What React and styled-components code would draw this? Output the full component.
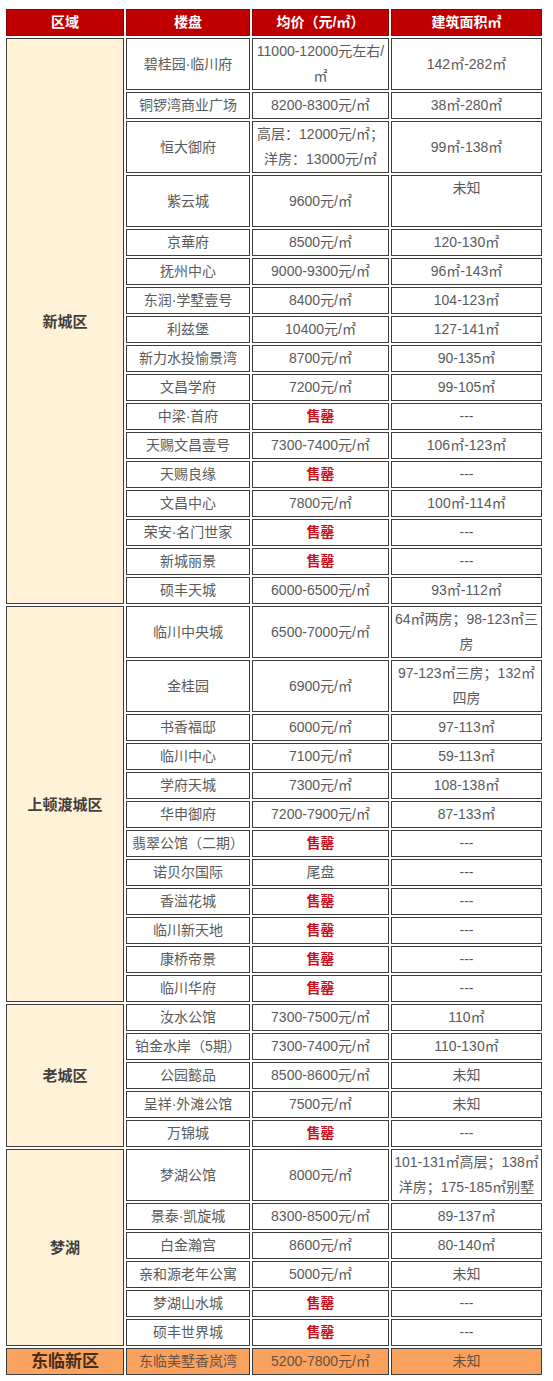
import { createGlobalStyle } from "styled-components";
import styled from "styled-components";

const GlobalStyle = createGlobalStyle`
  html, body {
    margin: 0;
    padding: 0;
    background: #ffffff;
  }
  body {
    font-family: "Liberation Sans", "Noto Sans CJK SC", sans-serif;
  }
`;

const Page = styled.div`
  padding: 7px 0 0 4px;
  width: 553px;
  box-sizing: border-box;
`;

const Table = styled.table`
  width: 540px;
  table-layout: fixed;
  border-collapse: separate;
  border-spacing: 2px;
  font-size: 14px;
  line-height: 25px;
`;

const HeadCell = styled.th`
  background: #c00000;
  border: 1px solid #8a0606;
  color: #ffffff;
  font-weight: bold;
  font-size: 14px;
  padding: 0;
  text-align: center;
`;

const Cell = styled.td`
  border: 1px solid #3d3d3d;
  background: ${(p) => (p.$last ? "#f9a15e" : "#ffffff")};
  color: ${(p) => (p.$sold ? "#cc1020" : p.$last ? "#6b5040" : "#5a5a5a")};
  font-weight: ${(p) => (p.$sold ? "bold" : "normal")};
  text-align: center;
  vertical-align: middle;
  padding: 0;
  white-space: nowrap;
  overflow: hidden;
`;

const RegionCell = styled.td`
  border: 1px solid #3d3d3d;
  background: ${(p) => (p.$last ? "#f9a15e" : "#fff2d6")};
  color: ${(p) => (p.$last ? "#4a2e1a" : "#3f3f3f")};
  font-weight: bold;
  font-size: ${(p) => (p.$last ? "17px" : "15px")};
  text-align: center;
  vertical-align: middle;
  padding: 0;
`;

const Line = styled.span`
  display: block;
`;

const regions = [
  {
    name: "新城区",
    rows: [
      ["碧桂园·临川府", ["11000-12000元左右/", "㎡"], ["142㎡-282㎡"]],
      ["铜锣湾商业广场", ["8200-8300元/㎡"], ["38㎡-280㎡"]],
      ["恒大御府", ["高层：12000元/㎡；", "洋房：13000元/㎡"], ["99㎡-138㎡"]],
      ["紫云城", ["9600元/㎡"], ["未知", "\u00a0"]],
      ["京華府", ["8500元/㎡"], ["120-130㎡"]],
      ["抚州中心", ["9000-9300元/㎡"], ["96㎡-143㎡"]],
      ["东润·学墅壹号", ["8400元/㎡"], ["104-123㎡"]],
      ["利兹堡", ["10400元/㎡"], ["127-141㎡"]],
      ["新力水投愉景湾", ["8700元/㎡"], ["90-135㎡"]],
      ["文昌学府", ["7200元/㎡"], ["99-105㎡"]],
      ["中梁·首府", ["售罄"], ["---"]],
      ["天赐文昌壹号", ["7300-7400元/㎡"], ["106㎡-123㎡"]],
      ["天赐良缘", ["售罄"], ["---"]],
      ["文昌中心", ["7800元/㎡"], ["100㎡-114㎡"]],
      ["荣安·名门世家", ["售罄"], ["---"]],
      ["新城丽景", ["售罄"], ["---"]],
      ["硕丰天城", ["6000-6500元/㎡"], ["93㎡-112㎡"]],
    ],
  },
  {
    name: "上顿渡城区",
    rows: [
      ["临川中央城", ["6500-7000元/㎡"], ["64㎡两房；98-123㎡三", "房"]],
      ["金桂园", ["6900元/㎡"], ["97-123㎡三房；132㎡", "四房"]],
      ["书香福邸", ["6000元/㎡"], ["97-113㎡"]],
      ["临川中心", ["7100元/㎡"], ["59-113㎡"]],
      ["学府天城", ["7300元/㎡"], ["108-138㎡"]],
      ["华申御府", ["7200-7900元/㎡"], ["87-133㎡"]],
      ["翡翠公馆（二期）", ["售罄"], ["---"]],
      ["诺贝尔国际", ["尾盘"], ["---"]],
      ["香溢花城", ["售罄"], ["---"]],
      ["临川新天地", ["售罄"], ["---"]],
      ["康桥帝景", ["售罄"], ["---"]],
      ["临川华府", ["售罄"], ["---"]],
    ],
  },
  {
    name: "老城区",
    rows: [
      ["汝水公馆", ["7300-7500元/㎡"], ["110㎡"]],
      ["铂金水岸（5期）", ["7300-7400元/㎡"], ["110-130㎡"]],
      ["公园懿品", ["8500-8600元/㎡"], ["未知"]],
      ["呈祥·外滩公馆", ["7500元/㎡"], ["未知"]],
      ["万锦城", ["售罄"], ["---"]],
    ],
  },
  {
    name: "梦湖",
    rows: [
      ["梦湖公馆", ["8000元/㎡"], ["101-131㎡高层；138㎡", "洋房；175-185㎡别墅"]],
      ["景泰·凯旋城", ["8300-8500元/㎡"], ["89-137㎡"]],
      ["白金瀚宫", ["8600元/㎡"], ["80-140㎡"]],
      ["亲和源老年公寓", ["5000元/㎡"], ["未知"]],
      ["梦湖山水城", ["售罄"], ["---"]],
      ["硕丰世界城", ["售罄"], ["---"]],
    ],
  },
  {
    name: "东临新区",
    last: true,
    rows: [["东临美墅香岚湾", ["5200-7800元/㎡"], ["未知"]]],
  },
];

function Lines({ items }) {
  if (items.length === 1) return items[0];
  return items.map((t, i) => <Line key={i}>{t}</Line>);
}

export default function App() {
  return (
    <Page>
      <GlobalStyle />
      <Table>
        <colgroup>
          <col style={{ width: 118 }} />
          <col style={{ width: 124 }} />
          <col style={{ width: 137 }} />
          <col style={{ width: 151 }} />
        </colgroup>
        <thead>
          <tr>
            <HeadCell>区域</HeadCell>
            <HeadCell>楼盘</HeadCell>
            <HeadCell>均价（元/㎡）</HeadCell>
            <HeadCell>建筑面积㎡</HeadCell>
          </tr>
        </thead>
        <tbody>
          {regions.map((region) =>
            region.rows.map(([name, price, area], i) => {
              const sold = price[0] === "售罄";
              return (
                <tr key={region.name + name}>
                  {i === 0 && (
                    <RegionCell rowSpan={region.rows.length} $last={region.last}>
                      {region.name}
                    </RegionCell>
                  )}
                  <Cell $last={region.last}>{name}</Cell>
                  <Cell $last={region.last} $sold={sold}>
                    <Lines items={price} />
                  </Cell>
                  <Cell $last={region.last}>
                    <Lines items={area} />
                  </Cell>
                </tr>
              );
            })
          )}
        </tbody>
      </Table>
    </Page>
  );
}
